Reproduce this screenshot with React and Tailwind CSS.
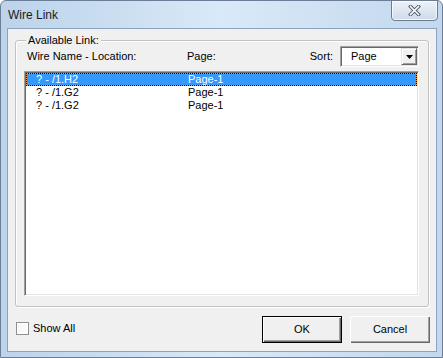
import React from 'react';

const rows = [
  { name: '? - /1.H2', page: 'Page-1' },
  { name: '? - /1.G2', page: 'Page-1' },
  { name: '? - /1.G2', page: 'Page-1' },
];

function CloseGlyph() {
  return (
    <svg width="13" height="11" viewBox="0 0 13 11">
      <path d="M2.5 1.5 L10.5 9.5 M10.5 1.5 L2.5 9.5" stroke="#4c5663" strokeWidth="3.4" strokeLinecap="square" fill="none" />
      <path d="M2.5 1.5 L10.5 9.5 M10.5 1.5 L2.5 9.5" stroke="#ffffff" strokeWidth="1.6" strokeLinecap="square" fill="none" />
    </svg>
  );
}

export default function App() {
  return (
    <div className="w-[443px] h-[358px] overflow-hidden bg-white" style={{ fontFamily: '"Liberation Sans", Arial, sans-serif' }}>
      {/* window frame */}
      <div className="w-[443px] h-[358px] flex flex-col border border-[#6a7f97] rounded-t-[6px] bg-gradient-to-r from-[#bcd3ea] via-[#d9e9f7] to-[#c3d8ee] pl-[6px] pr-[5px] pb-[5px] relative">
        {/* title bar */}
        <div className="h-[27px] flex items-center pl-[1px] text-[12px] text-[#1b1b1b]">Wire Link</div>
        <div className="absolute top-[-1px] right-[4px] w-[47px] h-[21px] border border-[#6d7d90] rounded-b-[4px] bg-gradient-to-b from-[#edf2f8] to-[#cfdbe9] flex items-center justify-center shadow-[inset_0_0_0_1px_rgba(255,255,255,0.7)]">
          <CloseGlyph />
        </div>

        {/* client area */}
        <div className="flex-1 border border-[#8ba3bd] bg-[#f0f0f0] flex flex-col text-[11px] text-black">
          {/* group box */}
          <div className="mt-[11px] mx-[7px] h-[267px] relative border border-[#c2c2c2] rounded-[3px] shadow-[inset_1px_1px_0_#ffffff,1px_1px_0_#ffffff] flex flex-col">
            <div className="absolute left-[10px] top-[-8px] px-[2px] bg-[#f0f0f0] leading-[14px]">Available Link:</div>

            {/* header */}
            <div className="mt-[5px] pl-[11px] pr-[9px] h-[21px] flex items-center">
              <div className="w-[160px]">Wire Name - Location:</div>
              <div className="flex-1">Page:</div>
              <div className="mr-[7px]">Sort:</div>
              <div className="w-[79px] h-[21px] flex border border-t-[#a0a0a0] border-l-[#a0a0a0] border-b-white border-r-white shadow-[inset_1px_1px_0_#696969,inset_-1px_-1px_0_#e3e3e3] bg-white p-[1px]">
                <div className="flex-1 pl-[9px] flex items-center">Page</div>
                <div className="w-[16px] h-full bg-[#f0f0f0] border border-t-[#e3e3e3] border-l-[#e3e3e3] border-b-[#696969] border-r-[#696969] shadow-[inset_1px_1px_0_#ffffff,inset_-1px_-1px_0_#a0a0a0] flex items-center justify-center">
                  <svg width="7" height="4" viewBox="0 0 7 4">
                    <path d="M0 0 H7 L3.5 4 Z" fill="#000" />
                  </svg>
                </div>
              </div>
            </div>

            {/* list */}
            <div className="ml-[8px] mt-[4px] w-[395px] h-[225px] bg-white border border-t-[#a0a0a0] border-l-[#a0a0a0] border-b-white border-r-white shadow-[inset_1px_1px_0_#696969,inset_-1px_-1px_0_#e3e3e3] p-[1px]">
              {rows.map((r, i) => (
                <div
                  key={i}
                  className={
                    i === 0
                      ? 'relative h-[13px] flex items-center pl-[9px] bg-[#3399ff] text-white border border-[#f29a3f] leading-[11px]'
                      : 'h-[13px] flex items-center pl-[10px] leading-[11px]'
                  }
                >
                  {i === 0 && <div className="absolute inset-[-1px] border border-dotted border-black" />}
                  <div className="w-[152px]">{r.name}</div>
                  <div>{r.page}</div>
                </div>
              ))}
            </div>
          </div>

          {/* bottom bar */}
          <div className="mt-[9px] pl-[8px] pr-[6px] flex items-start">
            <div className="mt-[4px] flex items-center">
              <div className="w-[13px] h-[13px] border border-[#8e8f8f] bg-gradient-to-br from-[#f4f4f4] to-white shadow-[inset_0_0_0_1px_#ffffff]" />
              <span className="ml-[4px]">Show All</span>
            </div>
            <div className="flex-1" />
            <button className="w-[80px] h-[27px] border border-black bg-[#f0f0f0] shadow-[inset_1px_1px_0_#ffffff,inset_-1px_-1px_0_#696969,inset_-2px_-2px_0_#a0a0a0] flex items-center justify-center">
              OK
            </button>
            <button className="ml-[8px] w-[80px] h-[27px] bg-[#f0f0f0] shadow-[inset_1px_1px_0_#ffffff,inset_-1px_-1px_0_#696969,inset_-2px_-2px_0_#a0a0a0] flex items-center justify-center">
              Cancel
            </button>
          </div>
        </div>
      </div>
    </div>
  );
}
